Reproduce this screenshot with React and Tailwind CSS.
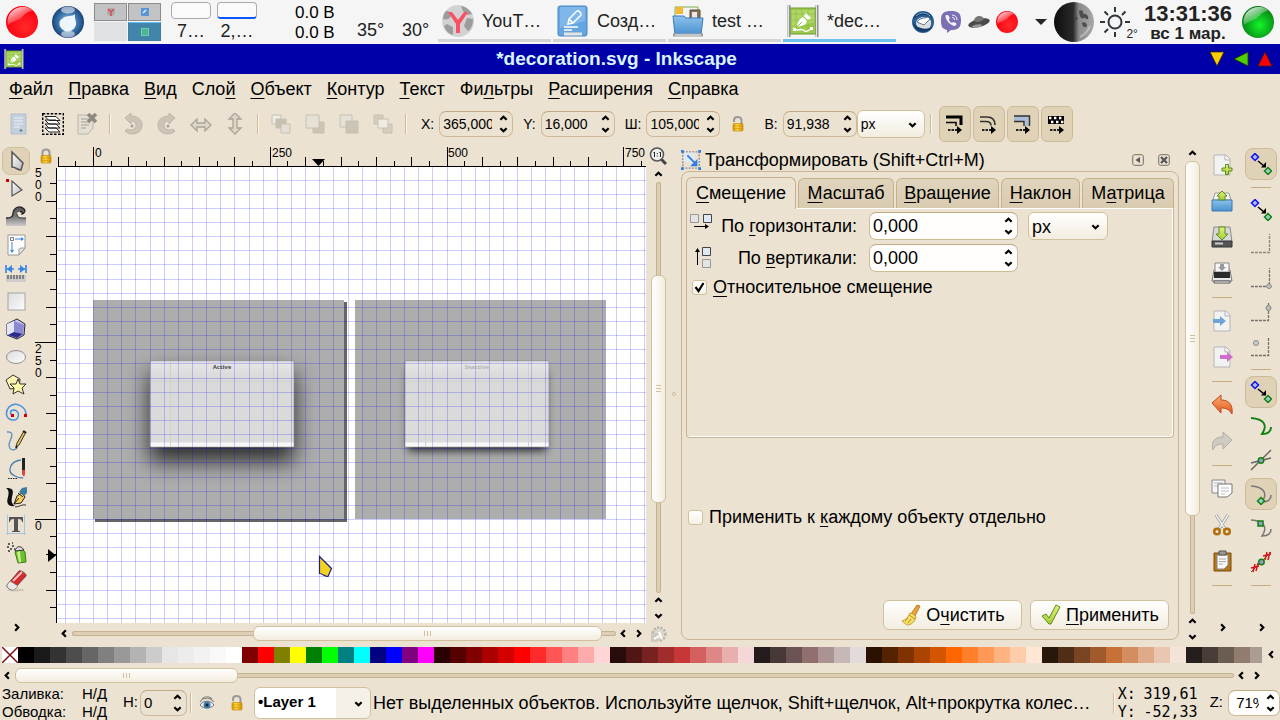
import React, { useState } from "react";
import clsx from "clsx";

/* ---------- small helpers ---------- */

// "&" marks the accelerator letter, as in GTK labels
const Accel = ({ text }) => {
  const i = text.indexOf("&");
  if (i < 0) return <span>{text}</span>;
  return (
    <span>
      {text.slice(0, i)}
      <span className="underline decoration-1 underline-offset-3">
        {text[i + 1]}
      </span>
      {text.slice(i + 2)}
    </span>
  );
};

const arrowPaths = {
  up: "M1.5 6.5 5 3l3.5 3.5",
  down: "M1.5 3.5 5 7l3.5-3.5",
  left: "M6.5 1.5 3 5l3.5 3.5",
  right: "M3.5 1.5 7 5 3.5 8.5",
};

const Arrow = ({ dir, className }) => (
  <svg
    viewBox="0 0 10 10"
    className={clsx("size-[9px] shrink-0", className)}
    fill="none"
    stroke="#000"
    strokeWidth="2.4"
  >
    <path d={arrowPaths[dir]} />
  </svg>
);

const VSep = ({ width = "w-3" }) => (
  <div className={clsx("flex shrink-0 justify-center", width)}>
    <div className="h-5 w-px bg-[#cdb996]" />
    <div className="h-5 w-px bg-[#fbf7ef]" />
  </div>
);

const HSep = () => (
  <div className="flex h-3 shrink-0 items-center justify-center">
    <div className="h-px w-5 bg-[#c6ab85]" />
  </div>
);

const Spin = ({ label, value, width, height = "h-[26px]", white, big, tight, id }) => (
  <>
    {label && (
      <label htmlFor={id} className={clsx("shrink-0", tight ? "mr-0.5" : "mr-[5px]")}>
        {label}
      </label>
    )}
    <div
      className={clsx(
        "flex shrink-0 items-center rounded-[7px] border border-[#cdbb98] border-t-[#c0a985]",
        white ? "bg-[#fffefc]" : "bg-[#ebe2d1]",
        width,
        height
      )}
    >
      <input
        id={id}
        defaultValue={value}
        className={clsx(
          "h-full w-0 min-w-0 flex-1 bg-transparent pl-[3px] outline-none",
          big && "text-lg"
        )}
      />
      <div className="flex w-5 shrink-0 flex-col items-center gap-0.5 pl-[3px]">
        <button aria-label="Больше">
          <Arrow dir="up" className="block" />
        </button>
        <button aria-label="Меньше">
          <Arrow dir="down" className="block" />
        </button>
      </div>
    </div>
  </>
);

const UnitSelect = ({ label, className }) => (
  <div className={clsx("relative shrink-0", className)}>
    <select
      aria-label={label}
      className="size-full appearance-none rounded-md border border-[#d0c09c] bg-linear-to-b from-white to-[#f3eddf] pl-[3px] outline-none"
    >
      <option>px</option>
      <option>mm</option>
    </select>
    <Arrow
      dir="down"
      className="pointer-events-none absolute top-1/2 right-2 -mt-1"
    />
  </div>
);

const Scrollbar = ({ vertical, before, thumb, after, className }) => (
  <div
    role="scrollbar"
    className={clsx("flex items-center", vertical && "flex-col", className)}
  >
    <button
      aria-label="Назад"
      className="flex size-[15px] shrink-0 items-center justify-center"
    >
      <Arrow dir={vertical ? "up" : "left"} />
    </button>
    <div
      style={{ flexGrow: before }}
      className={clsx(
        "basis-0 bg-[#dccfb5]",
        before > 0 && "border-[#c6b28e]",
        vertical ? "w-[5px] border-x" : "h-[5px] border-y",
        before > 0 && (vertical ? "rounded-t-sm border-t" : "rounded-l-sm border-l")
      )}
    />
    <div
      style={{ flexGrow: thumb }}
      className={clsx(
        "flex basis-0 items-center justify-center gap-0.5 rounded-md border border-[#d0c09c] to-[#f3eddf]",
        vertical
          ? "w-[15px] flex-col bg-linear-to-r from-white"
          : "h-[15px] bg-linear-to-b from-white"
      )}
    >
      {[0, 1, 2].map((n) => (
        <div
          key={n}
          className={clsx("bg-[#d0c09c]", vertical ? "h-px w-[5px]" : "h-[5px] w-px")}
        />
      ))}
    </div>
    <div
      style={{ flexGrow: after }}
      className={clsx(
        "basis-0 border-[#c6b28e] bg-[#dccfb5]",
        vertical
          ? "w-[5px] rounded-b-sm border-x border-b"
          : "h-[5px] rounded-r-sm border-y border-r"
      )}
    />
    {["up", "down"].map((d) => (
      <button
        key={d}
        aria-label={d === "up" ? "Назад" : "Вперёд"}
        className="flex size-[15px] shrink-0 items-center justify-center"
      >
        <Arrow dir={vertical ? d : d === "up" ? "left" : "right"} />
      </button>
    ))}
  </div>
);

const Svg = ({ size = "size-[22px]", box = 22, children, ...rest }) => (
  <svg
    viewBox={`0 0 ${box} ${box}`}
    className={clsx("shrink-0", size)}
    fill="none"
    {...rest}
  >
    {children}
  </svg>
);

/* ---------- gradients shared by all the icons ---------- */

const Defs = () => (
  <svg className="absolute size-0" aria-hidden="true">
    <defs>
      <radialGradient id="redBall" cx=".6" cy=".65" r=".6">
        <stop offset="0" stopColor="#ff2a2a" />
        <stop offset="1" stopColor="#fb0010" />
      </radialGradient>
      <radialGradient id="greenBall" cx=".55" cy=".6" r=".6">
        <stop offset="0" stopColor="#12f52a" />
        <stop offset="1" stopColor="#067a14" />
      </radialGradient>
      <linearGradient id="gloss" x1="0" y1="0" x2=".6" y2=".8">
        <stop offset="0" stopColor="#fff" />
        <stop offset="1" stopColor="#fff" stopOpacity=".05" />
      </linearGradient>
      <radialGradient id="blueBall" cx=".5" cy=".5" r=".55">
        <stop offset="0" stopColor="#9cc6e6" />
        <stop offset=".55" stopColor="#3c76ad" />
        <stop offset="1" stopColor="#12376b" />
      </radialGradient>
      <linearGradient id="moon" x1="0" x2="1">
        <stop offset="0" stopColor="#0c0c0c" />
        <stop offset=".48" stopColor="#2a2a2a" />
        <stop offset=".62" stopColor="#8a8a8a" />
        <stop offset="1" stopColor="#a8a8a8" />
      </linearGradient>
      <linearGradient id="silver" x1="0" y1="0" x2="1" y2="1">
        <stop offset="0" stopColor="#fff" />
        <stop offset="1" stopColor="#b9b9b9" />
      </linearGradient>
      <linearGradient id="paper" x1="0" y1="0" x2="1" y2="1">
        <stop offset="0" stopColor="#dcdcdc" />
        <stop offset="1" stopColor="#fdfdfd" />
      </linearGradient>
      <linearGradient id="steel" x1="0" y1="0" x2="0" y2="1">
        <stop offset="0" stopColor="#555" />
        <stop offset=".5" stopColor="#777" />
        <stop offset="1" stopColor="#ccc" />
      </linearGradient>
      <linearGradient id="gold" x1="0" x2="1">
        <stop offset="0" stopColor="#d89a00" />
        <stop offset=".4" stopColor="#ffd84a" />
        <stop offset="1" stopColor="#d49400" />
      </linearGradient>
      <linearGradient id="sky" x1="0" y1="0" x2="0" y2="1">
        <stop offset="0" stopColor="#8cc2ec" />
        <stop offset="1" stopColor="#4a90cf" />
      </linearGradient>
      <linearGradient id="lime" x1="0" y1="0" x2="0" y2="1">
        <stop offset="0" stopColor="#e4f07c" />
        <stop offset="1" stopColor="#a2cc3a" />
      </linearGradient>
      <linearGradient id="orange" x1="0" y1="0" x2="0" y2="1">
        <stop offset="0" stopColor="#f8b070" />
        <stop offset="1" stopColor="#e2561c" />
      </linearGradient>
      <linearGradient id="winBody" x1="0" y1="0" x2="0" y2="1">
        <stop offset="0" stopColor="#c9c9c9" />
        <stop offset=".03" stopColor="#e6e6e6" />
        <stop offset=".2" stopColor="#d9d9d9" />
        <stop offset="1" stopColor="#dcdcdc" />
      </linearGradient>
      <filter id="blurBig" x="-50%" y="-50%" width="200%" height="200%">
        <feGaussianBlur stdDeviation="11" />
      </filter>
      <filter id="blurSmall" x="-50%" y="-50%" width="200%" height="200%">
        <feGaussianBlur stdDeviation="4" />
      </filter>
    </defs>
  </svg>
);

/* ---------- desktop panel ---------- */

const Ball = ({ fill, size = "size-8" }) => (
  <Svg box={32} size={size}>
    <circle cx="16" cy="16" r="16" fill={`url(#${fill})`} />
    <path
      d="M2 19C0 8 8 1 17 1c5 0 8 2 9 4-7 1-8 5-12 8-4 2-9 3-12 6z"
      fill="url(#gloss)"
    />
  </Svg>
);

const BoardIcon = ({ size = "size-8" }) => (
  <Svg box={32} size={size}>
    <path d="M3 3h26v26H3z" fill="#9cca4c" stroke="#6c9a28" />
    <path d="M5 5h22v12L5 24z" fill="#b6dc70" opacity=".7" />
    <path d="M9 3v26M15 3v26M21 3v26M3 9h26M3 15h26M3 21h26" stroke="#8dbb42" strokeWidth=".6" />
    <path d="M2 0v32M30 0v32" stroke="#8f9290" strokeWidth="3" />
    <path d="M1.5 0v32M29.5 0v32" stroke="#e2e4e2" strokeWidth="1" />
    <path
      d="M10 22c1-5 2-8 6-10l4 4c-1 4-5 5-10 6zM17 11l2-3 5 5-3 2z"
      fill="#fff"
    />
    <path d="M7 24c4 3 6-1 9 1s4 2 8-1" stroke="#fff" strokeWidth="1.5" />
    <path d="M6 23h3v3H6zM23 22h3v3h-3z" fill="#fff" />
    <path d="m10 22 5-5" stroke="#8dbb42" />
  </Svg>
);

const tasks = [
  {
    title: "YouT…",
    icon: (
      <Svg box={32} size="size-8">
        <circle cx="16" cy="16" r="16" fill="#d2d2d2" />
        <path d="M4 6c3 0 6 2 5 5s-4 4-8 3c0-3 1-6 3-8zm15-5c5 1 9 4 11 8l-5 1-4-4zm6 12 6 1c0 6-2 10-5 12l-4-5zM5 19l6 3v8c-4-1-8-5-9-9z" fill="#9c9c9c" />
        <path d="M6 7h4l6 8 6-8h4l-8 12v9h-4v-9z" fill="#fb4f63" />
      </Svg>
    ),
  },
  {
    title: "Созд…",
    icon: (
      <Svg box={32} size="size-8">
        <rect x="1" y="1" width="29" height="30" rx="2" fill="#64a5e2" stroke="#4a86c0" />
        <path d="M3 2h25v14L3 23z" fill="#8cbff0" opacity=".7" />
        <path d="m11 19 1-5 8-8c1-1 5 2 4 4l-8 8zM12 14l4 4M7 22h14M7 25h8" stroke="#fff" strokeWidth="1.5" />
        <path d="M7 29h18" stroke="#e4e4e4" strokeWidth="3" />
      </Svg>
    ),
  },
  {
    title: "test …",
    icon: (
      <Svg box={32} size="size-8">
        <path d="M3 2h23v13H3z" fill="#f2f2f2" stroke="#7fae4a" />
        <path d="M4 2h7v7H4z" fill="#f4b92e" />
        <path d="M18 5h10v10H18z" fill="#8a7358" stroke="#5b4a38" />
        <path d="M20 7h5v8h-5z" fill="#e8e8e8" />
        <path d="M1 11h11l2 2h17l-2 17H3z" fill="url(#sky)" stroke="#3a7cb8" />
        <path d="M1 30h30" stroke="#9a9ea0" strokeWidth="3" />
        <path d="M3 30h26" stroke="#eee" strokeWidth="1" />
      </Svg>
    ),
  },
  { title: "*dec…", active: true, icon: <BoardIcon /> },
];

const Panel = () => (
  <header className="flex h-11 shrink-0 items-center bg-[#f5f5f5] pl-1.5 text-lg text-[#222]">
    <button aria-label="Меню">
      <Ball fill="redBall" />
    </button>
    <button aria-label="Браузер" className="ml-3.5">
      <Svg box={32} size="size-8">
        <circle cx="16" cy="16" r="16" fill="url(#blueBall)" />
        <ellipse cx="16" cy="4" rx="7" ry="3.5" fill="#fff" opacity=".55" />
        <ellipse cx="16" cy="28" rx="7" ry="3.5" fill="#fff" opacity=".55" />
        <path d="M23 8c-1 5 3 9 0 13-2 5-10 6-13 2-4-4-3-9 1-11 4-3 9-1 12-4z" fill="#eef6fb" />
      </Svg>
    </button>

    {/* Pager */}
    <div className="ml-2.5 grid w-[67px] grid-cols-2 gap-px">
      <div className="flex h-[18px] items-center justify-center border border-[#8b8b8b] bg-[#c2c3c5]">
        <Svg box={8} size="size-2">
          <circle cx="4" cy="4" r="4" fill="#aaa" />
          <path d="m1 1 3 3 3-3M4 4v4" stroke="#e0475c" strokeWidth="1.5" />
        </Svg>
      </div>
      <div className="flex h-[18px] items-center justify-center border border-[#8b8b8b] bg-[#c2c3c5]">
        <Svg box={8} size="size-2">
          <path d="M0 0h8v8H0z" fill="#5a96d6" />
          <path d="m2 5 3-3" stroke="#e8f2fc" strokeWidth="1.5" />
        </Svg>
      </div>
      <div className="h-[19px] bg-[#e0e1e3]" />
      <div className="flex h-[19px] items-center justify-center border border-[#3f7da3] border-t-[#62c0ee] bg-[#4285ab]">
        <div className="size-2 border border-[#7ac8b0] bg-[#4ab894]" />
      </div>
    </div>

    <div className="ml-2.5 flex w-10 flex-col items-center self-start pt-0.5">
      <div className="h-[17px] w-full rounded-sm border border-[#aaa] bg-[#fafafa]" />
      <span className="leading-6">7…</span>
    </div>
    <div className="ml-1.5 flex w-10 flex-col items-center self-start pt-0.5">
      <div className="h-[17px] w-full rounded-sm border border-b-2 border-[#aaa] border-b-[#0a57ff] bg-[#fafafa]" />
      <span className="leading-6">2,…</span>
    </div>

    <div className="ml-[38px] w-[62px] pt-px text-[17px] leading-5 text-black">
      <div>0.0 В</div>
      <div>0.0 В</div>
    </div>
    <span className="w-[45px] pt-4">35°</span>
    <span className="w-9 pt-4">30°</span>

    <nav className="flex h-full flex-1 gap-0.5">
      {tasks.map((task) => (
        <button
          key={task.title}
          className={clsx(
            "mb-0.5 flex w-[113px] items-center gap-2 border-b-3 pt-0.5 pl-1",
            task.active ? "border-[#70c0ee]" : "border-[#d4d4d4]"
          )}
        >
          {task.icon}
          {task.title}
        </button>
      ))}
    </nav>

    {/* Tray */}
    <div className="flex shrink-0 items-center gap-1.5 pr-1.5">
      <Svg>
        <circle cx="11" cy="11" r="11" fill="#2a5f96" />
        <path d="M4 11c2-6 12-7 15-1 1 6-3 10-8 10-4 0-7-4-7-9z" fill="#d9dde2" />
        <path d="m5 11 7 3 6-6-2-2-8 2z" fill="#fff" stroke="#44566b" strokeWidth=".8" />
        <path d="M1 8c3-9 16-9 20-1-5-4-14-4-20 1zM1 12c1 9 14 13 20 3-5 4-14 4-20-3z" fill="#163c68" />
        <path d="M4 5c4-4 10-4 14 0" stroke="#7ab0e0" />
      </Svg>
      <Svg>
        <path d="M11 0c7 0 10 2 10 9 0 8-3 10-10 10l-4 3v-3c-5-1-6-4-6-10C1 2 4 0 11 0z" fill="#7c6fb4" />
        <path d="M6 4c-2 2 2 9 8 11 2 0 3-2 2-3l-3-1-1 1c-2-1-3-2-3-4l1-1-2-3z" fill="#f4f2fa" />
        <path d="M12 4c3 0 5 2 5 5M12 6.500c2 0 2.500 1 2.500 2.500" stroke="#f4f2fa" />
      </Svg>
      <Svg>
        <ellipse cx="11" cy="12" rx="11" ry="4" fill="#4a4a4a" transform="rotate(-14 11 12)" />
        <path d="M6 10c0-5 8-7 10-2-3 3-7 4-10 2z" fill="#777" />
        <ellipse cx="9" cy="15" rx="5" ry="1.500" fill="#999" transform="rotate(-10 9 15)" />
      </Svg>
      <Ball fill="redBall" size="size-[22px]" />
      <Svg box={14} size="ml-2.5 size-3.5">
        <path d="M1 4h12L7 10z" fill="#232629" />
      </Svg>
      <Svg box={40} size="size-10">
        <circle cx="20" cy="20" r="20" fill="url(#moon)" />
        <path d="M25 9c3-2 5 1 4 3 4-1 6 3 5 5-2 1-3-2-4-1-3 2-5-3-5-7zm3 12c2-2 5 0 5 3-2 3-5 0-5-3zm-6-7 2 3-3 1z" fill="#3c3c3c" opacity=".8" />
        <path d="M26 35c4-2 8-6 10-11" stroke="#ddd" strokeWidth="2" opacity=".5" />
      </Svg>
      <div className="flex items-center">
        <Svg box={30} size="size-[30px]" stroke="#31363b" strokeWidth="2">
          <circle cx="15" cy="15" r="6.500" />
          <path d="M15 0v5M15 25v5M0 15h5M25 15h5M4.500 4.500 8 8M4.500 25.500 8 22M22 8l3.500-3.500" />
        </Svg>
        <span className="-ml-1 pt-6 text-xs">2°</span>
      </div>
      <div className="flex flex-col items-center font-bold">
        <span className="text-[22px] leading-6">13:31:36</span>
        <span className="text-[17px] leading-4">вс 1 мар.</span>
      </div>
      <button aria-label="Выход" className="ml-1">
        <Ball fill="greenBall" />
      </button>
    </div>
  </header>
);

const TitleBar = () => (
  <div className="flex h-[30px] shrink-0 items-center bg-[#0000a8] pr-[7px] pl-1">
    <BoardIcon size="size-5" />
    <h1 className="flex-1 text-center text-[19px] font-bold text-[#d8f4ff]">
      *decoration.svg - Inkscape
    </h1>
    <div className="flex gap-2">
      <button aria-label="Свернуть">
        <Svg box={18} size="size-4" stroke="#222">
          <path d="M1 1h16L9 17z" fill="#ffcc00" />
        </Svg>
      </button>
      <button aria-label="Развернуть">
        <Svg box={18} size="size-4" stroke="#222">
          <path d="M17 1v16L1 9z" fill="#4fcf00" />
        </Svg>
      </button>
      <button aria-label="Закрыть">
        <Svg box={18} size="size-4" stroke="#222">
          <path d="M1 17h16L9 1z" fill="#ff0000" />
        </Svg>
      </button>
    </div>
  </div>
);

/* ---------- menu and tool controls ---------- */

const menus = [
  "&Файл",
  "&Правка",
  "&Вид",
  "Сло&й",
  "&Объект",
  "&Контур",
  "&Текст",
  "Фи&льтры",
  "&Расширения",
  "&Справка",
];

const MenuBar = () => (
  <nav className="flex h-[30px] shrink-0 items-center gap-[15px] pl-[9px] text-lg">
    {menus.map((m) => (
      <button key={m}>
        <Accel text={m} />
      </button>
    ))}
  </nav>
);

const Padlock = ({ open }) => (
  <Svg box={16} size="size-4">
    <path
      d={open ? "M4 6V4c0-4 7-4 7.500 0v4" : "M4.500 8V4.500c0-4 7-4 7 0V8"}
      stroke="#999"
      strokeWidth="2"
    />
    <rect x="3" y="7.500" width="10" height="7.500" rx="1" fill="url(#gold)" stroke="#b98200" strokeWidth=".6" />
    <path d="M3.500 10h9M3.500 12.500h9" stroke="#c88f00" strokeWidth=".6" />
  </Svg>
);

const selectIcons = {
  all: (
    <Svg>
      <path d="M3 1h15v20H3z" fill="#c3cfdc" stroke="#b4c0cc" />
      <path d="M6 5h9M6 8h9M6 11h9M6 14h6" stroke="#dfe6ee" strokeWidth="1.500" />
      <path d="M13 16v3M11.500 17.500h3" stroke="#66788c" />
    </Svg>
  ),
  layers: (
    <Svg>
      <path d="M.7.700h20.600v20.600H.7z" stroke="#000" strokeWidth="1.400" strokeDasharray="2.500 1.500" />
      <path d="M3 15h11l4 4H7zM3 11h11l4 4H7zM3 7h11l4 4H7zM3 3.500h11l4 4H7z" fill="#fff" stroke="#222" />
    </Svg>
  ),
  deselect: (
    <Svg>
      <path d="M2 2h15v13l-5 6H2z" fill="#e4dfd4" stroke="#bbb5a8" />
      <path d="M5 6h8M5 9h8M5 12h8M5 15h5" stroke="#bbb5a8" strokeWidth="1.500" />
      <path d="m12 1 8 8M20 1l-8 8" stroke="#8f8a80" strokeWidth="3.500" />
    </Svg>
  ),
  ccw: (
    <Svg>
      <path d="M3 5 9 0v3c7 0 11 4 11 9 0 10-13 11-17 6l2-2c4 2 9 1 9-4 0-3-2-4-5-4v3z" fill="#ccc5b7" stroke="#bdb7aa" />
      <circle cx="10" cy="13" r="1.500" fill="#a9a397" />
    </Svg>
  ),
  cw: (
    <Svg>
      <path d="M19 5 13 0v3C6 3 2 7 2 12c0 10 13 11 17 6l-2-2c-4 2-9 1-9-4 0-3 2-4 5-4v3z" fill="#ccc5b7" stroke="#bdb7aa" />
      <circle cx="12" cy="13" r="1.500" fill="#a9a397" />
    </Svg>
  ),
  flipH: (
    <Svg>
      <path d="m1 12 6-6v4h8V6l6 6-6 6v-4H7v4z" fill="#ddd7cb" stroke="#aaa497" strokeWidth="1.300" />
    </Svg>
  ),
  flipV: (
    <Svg>
      <path d="m11 0 6 6h-4v9h4l-6 6-6-6h4V6H5z" fill="#ddd7cb" stroke="#aaa497" strokeWidth="1.300" />
    </Svg>
  ),
  lower: (
    <Svg stroke="#c6c0b3">
      <path d="M2 2h9v9H2z" fill="#efebe2" />
      <path d="M6 6h10v9H6z" fill="#c6c0b3" />
      <path d="M11 11h9v9h-9z" fill="#e4dfd4" />
    </Svg>
  ),
  down: (
    <Svg stroke="#c6c0b3">
      <path d="M9 9h11v11H9z" fill="#cbc5b8" />
      <path d="M2 2h13v13H2z" fill="#e6e1d6" />
    </Svg>
  ),
  up: (
    <Svg stroke="#c6c0b3">
      <path d="M2 2h12v12H2z" fill="#e6e1d6" />
      <path d="M8 8h12v12H8z" fill="#cbc5b8" />
    </Svg>
  ),
  raise: (
    <Svg stroke="#c6c0b3">
      <path d="M2 2h9v9H2zM11 11h9v9h-9z" fill="#d4cec1" />
      <path d="M6 6h10v9H6z" fill="#efebe2" />
    </Svg>
  ),
};

const affectArrow = (
  <>
    <path d="M4 17h9" stroke="#222" strokeWidth="2" strokeDasharray="2.500 1" />
    <path d="m13 13 5 4-5 4z" fill="#000" />
  </>
);

const affects = {
  "Толщина обводки": (
    <Svg>
      <path d="M2 4h15v8" stroke="#000" strokeWidth="3" />
      <path d="M2 9.500h10V13" stroke="#000" strokeWidth="1.500" />
      {affectArrow}
    </Svg>
  ),
  "Радиус углов": (
    <Svg>
      <path d="M2 4h7c5 0 8 3 8 8M2 8.500h6c4 0 5 2 5 4" stroke="#333" strokeWidth="1.700" />
      {affectArrow}
    </Svg>
  ),
  Градиенты: (
    <Svg>
      <path d="M2 3h15v10h-4V8H2z" fill="#a9bfd8" />
      <path d="M2 3h15.500v10M2 8.500h10V13" stroke="#333" strokeWidth="1.400" />
      {affectArrow}
    </Svg>
  ),
  Текстуры: (
    <Svg>
      <path d="M2 3h16v8H2z" fill="#000" />
      <path d="M3 5h14M5 9h14" stroke="#fff" strokeWidth="2.400" strokeDasharray="2.400 2.600" />
      {affectArrow}
    </Svg>
  ),
};

const ToolControls = () => (
  <div className="flex h-10 shrink-0 items-center pl-0.5 text-sm">
    {["all", "layers", "deselect", "|", "ccw", "cw", "flipH", "flipV", "|", "lower", "down", "up", "raise", "|"].map(
      (name, i) =>
        name === "|" ? (
          <VSep key={i} />
        ) : (
          <button key={name} aria-label={name} className="flex w-[34px] shrink-0 justify-center">
            {selectIcons[name]}
          </button>
        )
    )}
    <div className="w-[9px]" />
    <Spin id="x" label="X:" value="365,000" width="w-[74px]" />
    <div className="w-2.5" />
    <Spin id="y" label="Y:" value="16,000" width="w-[74px]" />
    <div className="w-2.5" />
    <Spin id="w" label="Ш:" value="105,000" width="w-[74px]" />
    <button aria-label="Сохранять пропорции" className="flex w-[35px] justify-center">
      <Padlock open />
    </button>
    <div className="w-[9px]" />
    <Spin id="h" label="В:" value="91,938" width="w-[74px]" />
    <UnitSelect label="Единицы" className="h-7 w-[68px]" />
    <VSep />
    <div className="ml-0.5 flex gap-0.5">
      {Object.entries(affects).map(([label, icon]) => (
        <button
          key={label}
          aria-label={label}
          aria-pressed="true"
          className="flex h-9 w-8 items-center justify-center rounded-md border border-[#cdbb98] bg-[#e0d2b7]"
        >
          {icon}
        </button>
      ))}
    </div>
  </div>
);

/* ---------- toolbox ---------- */

const tools = {
  Выделитель: (
    <path d="M7 2v15c4 0 5 3 9 3l2-7z" fill="url(#silver)" stroke="#555" strokeWidth="1.500" />
  ),
  Узлы: (
    <>
      <path d="M7 3v15l10-6z" fill="url(#silver)" stroke="#555" strokeWidth="1.200" />
      <path d="M1 1h3v3H1z" fill="#c00" />
    </>
  ),
  Корректор: (
    <>
      <path d="M1 20v-8c5 0 7-1 7-5 1-6 7-8 11-4 2 2 0 5-2 5-1-3-5-3-5 0 0 3 2 4 5 4h4v8z" fill="url(#steel)" />
      <path d="M1 12c5 0 7-1 7-5 1-6 7-8 11-4 2 2 0 5-2 5 1-3-1-3-2-2" stroke="#222" strokeWidth="1.300" />
      <path d="M12 8c0 3 2 4 5 4h4" stroke="#333" />
    </>
  ),
  Масштабирование: (
    <>
      <path d="M3 1h17v13l-6 7H3z" fill="#fdfdfd" stroke="#999" />
      <path d="M14 21v-5c0-2 1-2 6-2z" fill="#e4e4e4" stroke="#999" />
      <path d="M5.500 3.500h3v3h-3z" stroke="#777" />
      <path d="M10 5h6M7 8v8" stroke="#3a86d8" />
      <path d="m16 3 3 2-3 2zM5 16l2 3 2-3z" fill="#3a86d8" />
    </>
  ),
  Измеритель: (
    <>
      <path d="M1 3v8M21 3v8M2 7h7M13 7h7" stroke="#3584e4" strokeWidth="1.600" />
      <path d="m2 7 5-4v8zM20 7l-5-4v8z" fill="#3584e4" />
      <path d="M1 13h20v7H1z" fill="#ccc" />
      <path d="M3 13v4M6 13v4M9 13v4M12 13v4M15 13v4M18 13v4" stroke="#333" />
    </>
  ),
  Прямоугольник: <rect x="3" y="3" width="17" height="17" fill="url(#paper)" stroke="#a5a5a5" />,
  Параллелепипед: (
    <>
      <path d="m12 1 8 5-1 11-7 4-10-4V6z" fill="#c9c9ee" stroke="#223" />
      <path d="m9 3 10 4-1 9-9-2z" fill="#8a8ad0" />
      <path d="m2 6 7-3v11l-7 3z" fill="#e4e4fb" />
      <path d="m3 17 6-3 9 2-6 4z" fill="#2c2c8c" />
    </>
  ),
  Эллипс: <ellipse cx="11" cy="11" rx="9.500" ry="6.500" fill="url(#paper)" stroke="#8e8e8e" />,
  Звезда: (
    <>
      <path d="M1 6 8 1l7 4-1 9-9 1z" fill="#fbf4b0" stroke="#333" />
      <path d="m13 5 2 5 6 0-4 4 2 6-6-3-5 3 1-6-4-4 6 0z" fill="#fff9a8" stroke="#333" />
    </>
  ),
  Спираль: (
    <>
      <path d="M21 13c0-9-11-14-17-8-5 6-2 13 4 13 6 1 8-9 1-10-5 0-4 5-1 5" stroke="#4a90e2" strokeWidth="1.500" />
      <path d="M6 12h3v3H6zM19 12h3v3h-3z" fill="#c00" />
    </>
  ),
  Карандаш: (
    <>
      <path d="M2 2c9-1 3 8 2 12 0 7 5 7 8 4" stroke="#5a90c4" strokeWidth="1.300" />
      <path d="m11 17 1-4 7-12 2 1-7 13z" fill="#f2c84a" stroke="#333" />
      <path d="m18 1 3 2M11 18l1-2" stroke="#222" strokeWidth="2" />
    </>
  ),
  Перо: (
    <>
      <path d="M16 2C5 3 1 14 10 18c3 2 6 2 8 2" stroke="#4a80b0" strokeWidth="1.300" />
      <path d="M3 20.500h10" stroke="#222" strokeDasharray="1.500 1" />
      <path d="M17 0h3v12h-3z" fill="#222" />
      <path d="M17 12h3v4l-1 3-2-3z" fill="#d44" />
    </>
  ),
  Каллиграфия: (
    <>
      <path d="M1 2c7 0 8 2 6 9-1 5 0 7 3 9-7 1-9-3-7-9 1-4 1-7-2-9z" fill="#111" />
      <path d="m9 18 3-8 5-3 3 4-4 6z" fill="#f6cf63" stroke="#222" />
      <path d="m14 6 3-4 5-1v6l-3 3z" fill="#3c7c9c" />
      <path d="m13 7 5 4M9 18l5-6" stroke="#222" />
      <path d="M10 21c4 0 7-3 11-2" stroke="#333" />
    </>
  ),
  Текст: (
    <>
      <path d="M2.500 1v20M19.500 1v20M1 19.500h20" stroke="#a8c4dc" />
      <path d="M4 3h14v5h-1c0-2-1-3-4-3v11c0 1 1 1 2 1v1H7v-1c1 0 2 0 2-1V5C6 5 5 6 5 8H4z" fill="#555" />
    </>
  ),
  Распылитель: (
    <>
      <path d="m10 10 2-2 5-1 3 3 1 10-8 1z" fill="#6cc030" stroke="#3c7c18" />
      <path d="m12 10 3-1 1 11-2 .5z" fill="#c4f08c" />
      <path d="M10 9c1-5 6-6 9-1z" fill="#ddd" stroke="#333" />
      <path d="M3 2h2M7 4h2M2 5h2M5 7h2M9 7h1M3 9h2M7 1h1" stroke="#333" strokeWidth="1.500" />
    </>
  ),
  Ластик: (
    <>
      <ellipse cx="11" cy="20" rx="9" ry="1.500" fill="#cfc6b4" />
      <path d="M2 15 14 1c2-1 8 3 7 5L9 19c-2 2-8-1-7-4z" fill="#d8292f" stroke="#744" />
      <path d="m2 15 3-4 8 5-4 4c-2 1-8-2-7-5z" fill="#e9e9e9" stroke="#777" strokeWidth=".7" />
      <path d="m8 11 9-9" stroke="#f5c5c5" strokeWidth="2" />
    </>
  ),
};

const Toolbox = () => {
  const [active, setActive] = useState("Выделитель");
  return (
    <aside className="flex w-[34px] shrink-0 flex-col pt-[3px] pl-0.5">
      {Object.entries(tools).map(([name, art]) => (
        <button
          key={name}
          aria-label={name}
          onClick={() => setActive(name)}
          className={clsx(
            "flex size-7 shrink-0 items-center justify-center rounded-lg border",
            active === name ? "border-[#d0c09c] bg-[#e0d2b7]" : "border-transparent"
          )}
        >
          <Svg>{art}</Svg>
        </button>
      ))}
      <button aria-label="Ещё" className="mt-auto mb-[5px] flex h-6 w-7 items-center justify-center">
        <Arrow dir="right" />
      </button>
    </aside>
  );
};

/* ---------- rulers and canvas (coordinates are window pixels) ---------- */

const range = (from, to) => Array.from({ length: to - from + 1 }, (_, i) => from + i);
const TICK = 17.68;
const GRID = 14.14;

const TopRuler = () => (
  <svg className="size-full" fontSize="12">
    <g transform="translate(-57 -144)">
      <path d="M58 166.500H4000" stroke="#000" />
      {range(-2, 120).map((k) => {
        const x = Math.floor(93.5 + k * TICK) + 0.5;
        const top = k % 10 === 0 ? 147 : k % 2 === 0 ? 157 : 161;
        return <path key={k} d={`M${x} ${top}V166`} stroke="#000" />;
      })}
      {[0, 250, 500, 750].map((n, i) => (
        <text key={n} x={95 + Math.round(i * 176.7)} y="157">
          {n}
        </text>
      ))}
      <path d="M312 159h13l-6.500 7z" fill="#000" />
    </g>
  </svg>
);

const LeftRuler = () => (
  <svg className="size-full" fontSize="12">
    <g transform="translate(-34 -167)">
      <path d="M56.500 168V4000" stroke="#000" />
      {range(-60, 19).map((k) => {
        const y = Math.floor(519.3 - k * TICK) + 0.5;
        const left = k % 10 === 0 ? 35 : k % 2 === 0 ? 46 : 50;
        return <path key={k} d={`M${left} ${y}H56`} stroke="#000" />;
      })}
      {[
        ["500", 177],
        ["250", 353],
        ["0", 530],
      ].map(([label, y]) =>
        label.split("").map((ch, i) => (
          <text key={label + i} x="35" y={y + i * 12}>
            {ch}
          </text>
        ))
      )}
      <path d="M48 549v13l8-6.500z" fill="#000" />
    </g>
  </svg>
);

const Decoration = ({ x, title, color, shadow }) => (
  <g>
    {shadow}
    <rect x={x} y="360.500" width="144" height="86.500" rx="1.500" fill="url(#winBody)" stroke="#8f8f8f" strokeWidth=".7" />
    <path d={`M${x + 0.5} 444.500h143`} stroke="#f8f8f8" strokeWidth="4" />
    <path d={`M${x + 20.5} 361v86M${x + 123.5} 361v86M${x} 381.500h144`} stroke="#d0d0d0" />
    <text
      x={x + 72}
      y="369"
      fontSize="6"
      fontWeight="700"
      fontFamily="Noto Sans, sans-serif"
      textAnchor="middle"
      fill={color}
    >
      {title}
    </text>
  </g>
);

const Canvas = () => (
  <svg className="size-full bg-white">
    <g transform="translate(-57 -167)">
      <path d="M344 302h3v220H95v-3h249z" fill="#666" />
      <rect x="93" y="300" width="251" height="219" fill="#adadad" />
      <rect x="355" y="300" width="251" height="219" fill="#adadad" />
      <Decoration
        x={150}
        title="Active"
        color="#4a4a4a"
        shadow={
          <rect x="149" y="372" width="146" height="90" fill="#000" opacity=".72" filter="url(#blurBig)" />
        }
      />
      <Decoration
        x={405}
        title="Inactive"
        color="#b4b4b4"
        shadow={
          <rect x="408" y="370" width="138" height="81" fill="#000" opacity=".75" filter="url(#blurSmall)" />
        }
      />
      <g stroke="#0000ff" strokeOpacity=".2" shapeRendering="crispEdges">
        {range(-2, 180).map((k) => {
          const x = Math.floor(93.5 + k * GRID) + 0.5;
          return <path key={k} d={`M${x} 0V4000`} />;
        })}
        {range(-100, 25).map((k) => {
          const y = Math.floor(519.5 - k * GRID) + 0.5;
          return <path key={k} d={`M0 ${y}H4000`} />;
        })}
      </g>
      <path d="m319.500 556.500 12 12-3.500 8c-4 0-5-3-8.500-3z" fill="#f2d321" stroke="#1c1c8c" strokeWidth="1.200" />
    </g>
  </svg>
);

const Editor = () => (
  <main className="grid min-w-0 flex-1 grid-cols-[23px_minmax(0,1fr)_24px] grid-rows-[23px_minmax(0,1fr)_21px]">
    <button aria-label="Блокировка направляющих" className="flex justify-center pt-1">
      <Padlock />
    </button>
    <TopRuler />
    <button aria-label="Масштаб 1:1" className="flex justify-center pt-[3px]">
      <Svg box={18} size="size-[18px]">
        <path d="m12 12 5 5" stroke="#444" strokeWidth="3" />
        <circle cx="8" cy="7.500" r="6.500" fill="#efefef" stroke="#555" strokeWidth="1.500" />
        <path d="m4.500 6 1-1v5M10.500 6l1-1v5M8.300 6v1M8.300 8.500v1" stroke="#222" />
      </Svg>
    </button>
    <LeftRuler />
    <Canvas />
    <Scrollbar vertical before={93} thumb={227} after={90} />
    <div />
    <Scrollbar before={181} thumb={348} after={13} />
    <button aria-label="Управление цветом" className="flex items-center justify-center">
      <Svg box={18} size="size-[18px]">
        <circle cx="10" cy="9" r="6.500" fill="#ddd8cd" stroke="#b9b4a9" strokeWidth="2.500" strokeDasharray="2 1.500" />
        <path d="M2 8h7v9H2z" fill="#cfcac0" />
        <path d="m10 7 3 7M5 14l5-3" stroke="#fff" strokeWidth="2" />
      </Svg>
    </button>
  </main>
);

/* ---------- transform dock ---------- */

const tabs = [
  ["&Смещение", "w-[110px]"],
  ["&Масштаб", "w-24"],
  ["&Вращение", "w-[103px]"],
  ["&Наклон", "w-[79px]"],
  ["М&атрица", "w-[92px]"],
];

const Check = ({ id, label, defaultChecked, className }) => (
  <div className={clsx("flex items-center", className)}>
    <span className="relative mr-1.5 block size-[15px]">
      <input
        id={id}
        type="checkbox"
        defaultChecked={defaultChecked}
        className="peer block size-full appearance-none rounded-[3px] border border-[#d0c09c] bg-linear-to-b from-white to-[#f6f1e6]"
      />
      <svg
        viewBox="0 0 15 15"
        className="pointer-events-none absolute inset-0 hidden peer-checked:block"
        fill="none"
        stroke="#000"
        strokeWidth="2.200"
      >
        <path d="m3.500 7 3 4 5-8" />
      </svg>
    </span>
    <label htmlFor={id}>
      <Accel text={label} />
    </label>
  </div>
);

const DockButton = ({ icon, text }) => (
  <button className="flex h-[30px] w-[139px] items-center justify-center gap-1 rounded-md border border-[#d0c09c] bg-linear-to-b from-white to-[#f3eddf]">
    {icon}
    <Accel text={text} />
  </button>
);

const Dock = () => {
  const [tab, setTab] = useState(0);
  return (
    <section className="ml-1 flex w-[498px] shrink-0 flex-col pb-1 text-lg">
      <div className="flex h-[27px] shrink-0 items-center gap-1 pt-1">
        <Svg size="size-5">
          <path d="M2 2h18v18H2z" stroke="#888" strokeWidth="1.500" strokeDasharray="2 1.500" />
          <path d="M3 3h12v10H3z" fill="#dfe9f5" />
          <path d="m7 6 9 9" stroke="#2f7de0" strokeWidth="2" />
          <path d="M18 10v8h-8z" fill="#2f7de0" />
          <path d="M0 0h3v3H0zM19 0h3v3h-3zM0 19h3v3H0zM19 19h3v3h-3z" fill="#2f7de0" />
        </Svg>
        <h2 className="flex-1">Трансформировать (Shift+Ctrl+M)</h2>
        <button aria-label="Свернуть панель" className="mr-2.5">
          <Svg box={12} size="size-3">
            <rect x=".7" y=".7" width="10.600" height="10.600" rx="2" stroke="#77705f" />
            <path d="M8 3v6L3.500 6z" fill="#555" />
          </Svg>
        </button>
        <button aria-label="Закрыть панель" className="mr-[9px]">
          <Svg box={12} size="size-3">
            <rect x=".7" y=".7" width="10.600" height="10.600" rx="2" stroke="#77705f" />
            <path d="m3 3 6 6M9 3 3 9" stroke="#555" strokeWidth="2.200" />
          </Svg>
        </button>
      </div>

      <div className="flex min-h-0 flex-1 flex-col rounded-lg border border-[#c9b593] px-1 pt-[5px] pb-[9px]">
        <div role="tablist" className="flex h-[31px] shrink-0 items-end gap-0.5">
          {tabs.map(([name, width], i) => (
            <button
              key={name}
              role="tab"
              aria-selected={tab === i}
              onClick={() => setTab(i)}
              className={clsx(
                "rounded-t-md border border-b-0 border-[#c6b08b]",
                tab === i
                  ? "z-10 -mb-px h-8 bg-[#ebe2d1] pb-0.5"
                  : "h-[30px] bg-linear-to-b from-[#e0d4bd] to-[#d9cbb0] pb-px",
                width
              )}
            >
              <Accel text={name} />
            </button>
          ))}
        </div>
        <div className="h-[230px] shrink-0 rounded-b-sm border border-[#c9b593] border-t-white bg-[#ebe2d1] pt-[3px] pl-[3px] shadow-[inset_-1px_-1px_0_#fff]">
          <div className="grid w-max grid-cols-[22px_145px_auto_auto] items-center gap-y-1">
            <Svg box={24} size="size-6 -mt-2">
              <path d="M.5 4.500h8v8h-8z" fill="#e4e4e4" stroke="#999" />
              <path d="M13.500 4.500h8v8h-8z" fill="#dfe9f5" stroke="#444" />
              <path d="M4 16.500h12" stroke="#000" />
              <path d="M15 14v5l4-2.500z" fill="#000" />
            </Svg>
            <label htmlFor="moveX" className="text-right">
              <Accel text="По &горизонтали:" />
            </label>
            <div className="ml-3">
              <Spin id="moveX" value="0,000" width="w-[149px]" height="h-7" white big />
            </div>
            <UnitSelect label="Единицы смещения" className="ml-2.5 h-7 w-20" />
            <Svg box={24} size="size-6">
              <path d="M12.500 1.500h8v8h-8z" fill="#dfe9f5" stroke="#444" />
              <path d="M12.500 13.500h8v8h-8z" fill="#e4e4e4" stroke="#999" />
              <path d="M7.500 5v14" stroke="#000" />
              <path d="M5 6h5L7.500 2z" fill="#000" />
            </Svg>
            <label htmlFor="moveY" className="text-right">
              <Accel text="По &вертикали:" />
            </label>
            <div className="ml-3">
              <Spin id="moveY" value="0,000" width="w-[149px]" height="h-7" white big />
            </div>
          </div>
          <Check
            id="relative"
            label="&Относительное смещение"
            defaultChecked
            className="mt-px ml-0.5"
          />
        </div>
        <Check
          id="each"
          label="Применить к &каждому объекту отдельно"
          className="mt-[65px] ml-0.5"
        />
        <div className="mt-auto mr-[5px] flex justify-end gap-2">
          <DockButton
            text="О&чистить"
            icon={
              <Svg>
                <path d="m11 10 6-9 3 1-5 10z" fill="#e8a33a" stroke="#a86a14" strokeWidth=".8" />
                <path d="M10 9c2 0 5 2 6 4-1 5-5 8-9 8l-5-4c4-1 6-4 8-8z" fill="#f6dd62" stroke="#b7902a" strokeWidth=".8" />
                <path d="m9 11 6 4M5 17l3-3M8 19l3-4" stroke="#b7902a" />
              </Svg>
            }
          />
          <DockButton
            text="&Применить"
            icon={
              <Svg>
                <path d="m2 12 4-2 3 4 7-13 4 2-9 17H9z" fill="url(#lime)" stroke="#5c8c1c" />
              </Svg>
            }
          />
        </div>
      </div>
    </section>
  );
};

/* ---------- command and snap bars ---------- */

const sheet = (
  <>
    <path d="M3 1h12l4 4v16H3z" fill="#f2f2f2" stroke="#b5b5b5" />
    <path d="M14 1v5h5" stroke="#b5b5b5" />
  </>
);

const commands = [
  [
    "Создать",
    <>
      {sheet}
      <path d="M14.500 10.500h3v3.500h3.500v3h-3.500v3.500h-3V17H11v-3h3.500z" fill="url(#lime)" stroke="#5c8c1c" />
    </>,
  ],
  [
    "Открыть",
    <>
      <path d="M2 10 4 3h14l2 7z" fill="#f4f4f4" stroke="#999" />
      <path d="M1 10h20v11H1z" fill="url(#sky)" stroke="#3f7cb4" />
      <path d="m11 1 5 5h-2v4H8V6H6z" fill="url(#lime)" stroke="#5c8c1c" />
    </>,
  ],
  [
    "Сохранить",
    <>
      <path d="M3 1h16l2 15H1z" fill="#d8d8d8" stroke="#888" />
      <path d="M1 15h20v6H1z" fill="#555" stroke="#333" />
      <path d="M4 17.500h8" stroke="#ccc" strokeWidth="2" />
      <path d="m11 14 6-6h-3V1H8v7H5z" fill="url(#lime)" stroke="#5c8c1c" />
    </>,
  ],
  [
    "Печать",
    <>
      <path d="M3 8h16l2 11H1z" fill="#e8e8e8" stroke="#777" />
      <path d="M4 1h14v9H4z" fill="#f6f6f6" stroke="#888" />
      <path d="M3 10h16v6H3z" fill="#2a2a2a" />
      <path d="M3 19h16v2H3z" fill="#fff" stroke="#555" />
      <path d="M11 9 7 5h2V2h4v3h2z" fill="#999" />
    </>,
  ],
  null,
  [
    "Импорт",
    <>
      {sheet}
      <path d="M2 9h7V6l6 5-6 5v-3H2z" fill="#6fa4d4" />
    </>,
  ],
  [
    "Экспорт",
    <>
      {sheet}
      <path d="M9 9h7V6l6 5-6 5v-3H9z" fill="#d06ccc" />
    </>,
  ],
  null,
  [
    "Отменить",
    <path d="m1 9 9-8v5c9 0 12 6 11 14-3-5-6-6-11-6v5z" fill="url(#orange)" stroke="#c4491a" />,
  ],
  [
    "Повторить",
    <path d="m21 10-9-8v5C3 7 0 12 2 20c2-5 5-6 10-6v5z" fill="#cfcbc2" stroke="#b2aea5" />,
  ],
  null,
  [
    "Копировать",
    <>
      <path d="M1 2h13v13H1z" fill="#f4f4f4" stroke="#888" />
      <path d="M3 5h9M3 8h4" stroke="#bbb" />
      <path d="M7 6h14v9l-5 4H7z" fill="#fff" stroke="#777" />
      <path d="M10 10h8M10 13h8M10 16h4" stroke="#bbb" />
    </>,
  ],
  [
    "Вырезать",
    <>
      <path d="m5 1 9 14M17 1 8 15" stroke="#999" strokeWidth="3" />
      <path d="m5 1 9 14M17 1 8 15" stroke="#eee" strokeWidth="1.500" />
      <circle cx="6" cy="17.500" r="2.800" stroke="#b0700c" strokeWidth="2.500" />
      <circle cx="16" cy="17.500" r="2.800" stroke="#b0700c" strokeWidth="2.500" />
    </>,
  ],
  [
    "Вставить",
    <>
      <path d="M3 3h17v18H3z" fill="#b8761a" stroke="#7a4c08" />
      <path d="M6 5h11v10l-4 4H6z" fill="#f8f8f8" stroke="#888" />
      <path d="M8 1h7v4H8z" fill="#999" stroke="#555" />
      <path d="M8 9h7M8 11.500h7M8 14h4" stroke="#aaa" />
    </>,
  ],
  null,
];

const node = (x, y, c, f = "#aebcf6") => (
  <path d={`M${x} ${y - 3.5}l3.500 3.500-3.500 3.500-3.500-3.500z`} fill={f} stroke={c} strokeWidth="1.500" />
);

const snapMain = (
  <>
    {node(5, 4, "#1010f0")}
    <path d="m8 8 6 5" stroke="#000" strokeWidth="1.500" />
    <path d="M11 14.500h5V9z" fill="#000" />
    {node(18, 18, "#118011", "#9cc")}
  </>
);

const curve = "M1 3c13 1 17 7 11 16 6 0 9-3 9-7";

const dashes = (d) => <path d={d} stroke="#77726a" strokeWidth="1.300" strokeDasharray="3 1" />;

const snaps = [
  ["Прилипание", snapMain, true],
  null,
  ["Площадки", snapMain],
  ["Края площадки", <g opacity=".8">{dashes("M1 19.500h18.500V1")}</g>],
  [
    "Углы площадки",
    <>
      {dashes("M1 19.500h18.500V1")}
      <path d="m19 16 3 3.500-3 2.500-3-2.500z" fill="#bbb" stroke="#888" />
    </>,
  ],
  [
    "Середины краёв",
    <>
      {dashes("M1 19.500h17.500V2")}
      <circle cx="18.500" cy="7" r="2.500" fill="#bbb" stroke="#888" />
    </>,
  ],
  [
    "Центры площадок",
    <>
      {dashes("M1 20.500h17.500V3")}
      <circle cx="6" cy="8" r="2.500" fill="#ccc" stroke="#888" />
    </>,
  ],
  null,
  ["Узлы и рычаги", snapMain, true],
  ["К контурам", <path d={curve} stroke="#118011" strokeWidth="1.900" />],
  [
    "К пересечениям",
    <>
      <path d="M1 21 21 1M1 14l20-5" stroke="#666" strokeWidth="1.500" />
      <circle cx="11" cy="11.500" r="2.700" fill="#99c" stroke="#118011" strokeWidth="1.500" />
    </>,
  ],
  [
    "К острым узлам",
    <>
      <path d={curve} stroke="#777" strokeWidth="1.500" />
      {node(11, 18, "#118011", "#9cc")}
    </>,
    true,
  ],
  [
    "К сглаженным узлам",
    <>
      <path d={curve} stroke="#777" strokeWidth="1.500" />
      <path d="M8 4h5v5H8z" fill="#99c" stroke="#118011" strokeWidth="1.500" />
    </>,
  ],
  [
    "К серединам линий",
    <>
      <path d="M1 21 21 1" stroke="#555" />
      <path d="M5 13 3 21M8 12l-2 8M17 1l-2 8M20 1l-2 8M1 17l8-2M13 5l8-2" stroke="#d01818" strokeWidth="1.500" />
      <circle cx="11.500" cy="11" r="2.700" fill="#99c" stroke="#118011" strokeWidth="1.500" />
    </>,
  ],
  null,
];

const CommandBar = () => (
  <div className="flex w-8 shrink-0 flex-col pt-[3px]">
    {commands.map((c, i) =>
      c ? (
        <button key={c[0]} aria-label={c[0]} className="flex h-9 shrink-0 items-center justify-center">
          <Svg>{c[1]}</Svg>
        </button>
      ) : (
        <HSep key={i} />
      )
    )}
    <button aria-label="Ещё команды" className="mt-auto mb-[5px] flex h-6 items-center justify-center">
      <Arrow dir="right" />
    </button>
  </div>
);

const SnapBar = () => (
  <div className="mr-[3px] ml-[7px] flex w-8 shrink-0 flex-col pt-[3px]">
    {snaps.map((s, i) =>
      s ? (
        <button
          key={s[0]}
          aria-label={s[0]}
          className={clsx(
            "my-px flex size-8 shrink-0 items-center justify-center rounded-lg border",
            s[2] ? "border-[#cdbb98] bg-[#e0d2b7]" : "border-transparent"
          )}
        >
          <Svg>{s[1]}</Svg>
        </button>
      ) : (
        <HSep key={i} />
      )
    )}
    <button aria-label="Ещё прилипание" className="mt-auto mb-[5px] flex h-6 items-center justify-center">
      <Arrow dir="right" />
    </button>
  </div>
);

/* ---------- palette and status bar ---------- */

const palette = (
  "000000 1a1a1a 333333 4d4d4d 666666 808080 999999 b3b3b3 cccccc e6e6e6 ececec f2f2f2 f9f9f9 ffffff " +
  "800000 ff0000 808000 ffff00 008000 00ff00 008080 00ffff 000080 0000ff 800080 ff00ff " +
  "2b0000 550000 800000 aa0000 d40000 ff0000 ff2a2a ff5555 ff8080 ffaaaa ffd5d5 " +
  "280b0b 501616 782121 a02c2c c83737 d35f5f de8787 e9afaf f4d7d7 " +
  "241c1c 483737 6c5353 916f6f ac9393 c8b7b7 e3dbdb " +
  "2b1100 552200 803300 aa4400 d45500 ff6600 ff7f2a ff9955 ffb380 ffccaa ffe6d5 " +
  "28170b 502d16 784421 a05a2c c87137 d38d5f deaa87 e9c6af f4e3d7 " +
  "241f1c 483e37 6c5d53 917c6f ac9d93"
).split(" ");

const Palette = () => (
  <div className="flex h-[21px] shrink-0 items-center pl-0.5">
    <div className="flex h-4 min-w-0 flex-1 overflow-hidden">
      <button aria-label="Нет" className="w-4 shrink-0 bg-white">
        <svg viewBox="0 0 16 16" className="size-4" stroke="#7a1218" strokeWidth="1.500">
          <path d="m0 0 16 16M16 0 0 16" />
        </svg>
      </button>
      {palette.map((c, i) => (
        <button
          key={i}
          aria-label={`#${c}`}
          className="w-4 shrink-0"
          style={{ backgroundColor: `#${c}` }}
        />
      ))}
    </div>
    <button aria-label="Меню палитры" className="flex w-[18px] shrink-0 justify-center">
      <Arrow dir="left" />
    </button>
  </div>
);

const StatusBar = () => (
  <footer className="flex h-[35px] shrink-0 items-center pl-0.5 text-[15px]">
    <div className="grid w-[121px] shrink-0 grid-cols-[80px_auto] leading-[18px]">
      <span>Заливка:</span>
      <span>Н/Д</span>
      <span>Обводка:</span>
      <span>Н/Д</span>
    </div>
    <Spin id="opacity" label="Н:" value="0" width="w-[47px]" tight />
    <VSep width="w-2" />
    <button aria-label="Видимость слоя" className="flex w-6 justify-center">
      <Svg box={18} size="size-[18px]">
        <path d="M2 11c3-5 11-5 14 0-3 4-11 4-14 0z" fill="#eee" stroke="#777" />
        <path d="M2 8c3-5 10-5 14 0M4 5c3-3 7-3 10 0" stroke="#888" strokeWidth="1.200" />
        <circle cx="9" cy="11" r="3.500" fill="#3f7fb0" />
        <circle cx="9" cy="11" r="1.500" fill="#123" />
      </Svg>
    </button>
    <button aria-label="Блокировка слоя" className="flex w-[35px] justify-center">
      <Padlock open />
    </button>
    <div className="relative h-8 w-[117px] shrink-0">
      <select
        aria-label="Слой"
        className="size-full appearance-none rounded-md border border-[#d0c09c] bg-linear-to-r from-white from-70% to-[#f6f1e6] to-70% pl-[3px] font-bold outline-none"
      >
        <option>•Layer 1</option>
      </select>
      <Arrow dir="down" className="pointer-events-none absolute top-3 right-2" />
    </div>
    <p className="ml-0.5 min-w-0 flex-1 truncate text-lg">
      Нет выделенных объектов. Используйте щелчок, Shift+щелчок, Alt+прокрутка колес…
    </p>
    <VSep width="w-2" />
    <div className="mr-3 grid w-20 shrink-0 grid-cols-2 font-['DejaVu_Sans_Mono',monospace] text-[15px] leading-[18px]">
      <span>X:</span>
      <span className="justify-self-end">319,61</span>
      <span>Y:</span>
      <span className="justify-self-end">-52,33</span>
    </div>
    <Spin id="zoom" label="Z:" value=" 71%" width="w-[52px]" white />
  </footer>
);

const App = () => (
  <div className="flex h-screen flex-col overflow-hidden bg-[#ebe2d1] font-['Liberation_Sans',Arial,sans-serif] text-black">
    <Defs />
    <Panel />
    <TitleBar />
    <MenuBar />
    <ToolControls />
    <div className="flex min-h-0 flex-1">
      <Toolbox />
      <Editor />
      <div className="flex w-[7px] shrink-0 items-center justify-center">
        <div className="size-1 rounded-full border border-[#c9b593] bg-[#f7f2e8]" />
      </div>
      <Dock />
      <Scrollbar vertical before={0} thumb={356} after={98} className="w-[27px] shrink-0 pt-0.5" />
      <CommandBar />
      <SnapBar />
    </div>
    <Palette />
    <Scrollbar before={0} thumb={222} after={997} className="h-5 shrink-0 pr-4" />
    <StatusBar />
  </div>
);

export default App;
